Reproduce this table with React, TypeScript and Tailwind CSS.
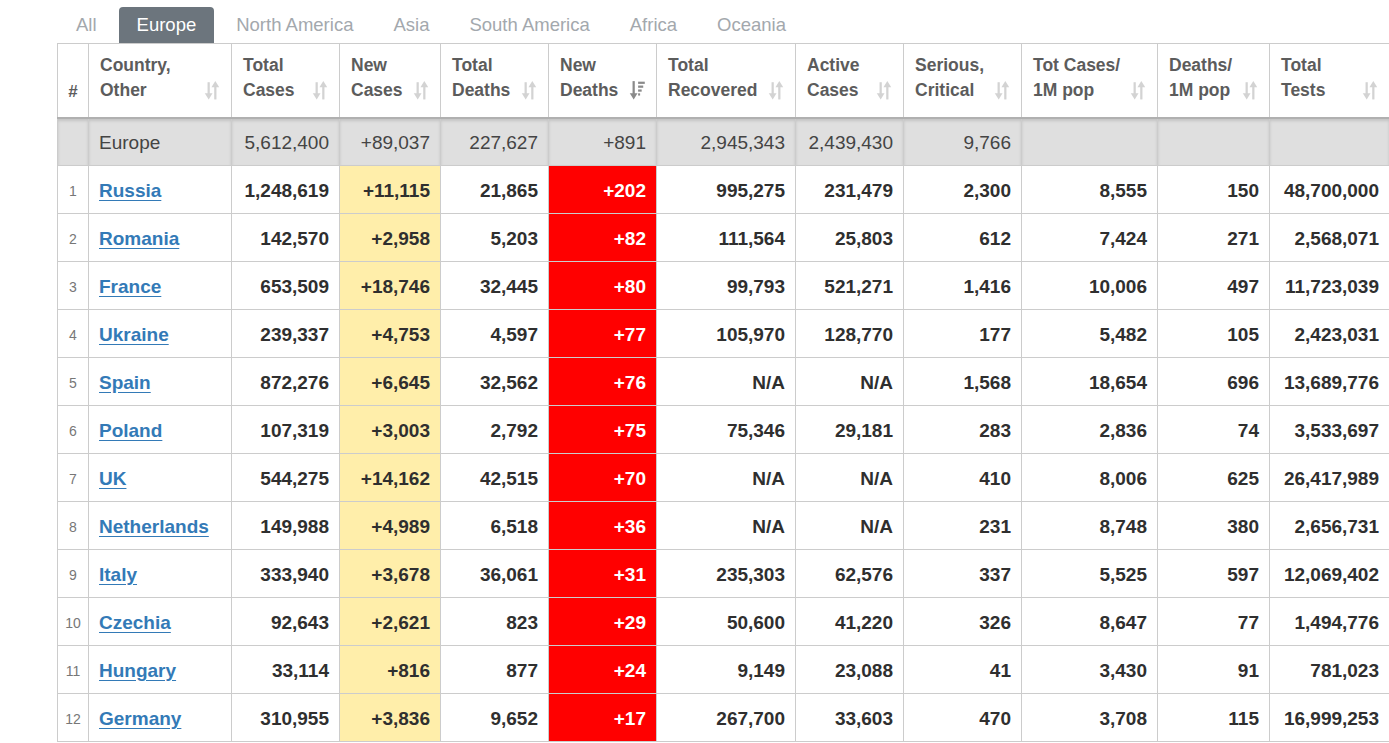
import React from "react";

const tabs = ["All", "Europe", "North America", "Asia", "South America", "Africa", "Oceania"];

const headers: { label: [string, string]; w: string; active?: boolean }[] = [
  { label: ["Country,", "Other"], w: "w-[143px]" },
  { label: ["Total", "Cases"], w: "w-[108px]" },
  { label: ["New", "Cases"], w: "w-[101px]" },
  { label: ["Total", "Deaths"], w: "w-[108px]" },
  { label: ["New", "Deaths"], w: "w-[108px]", active: true },
  { label: ["Total", "Recovered"], w: "w-[139px]" },
  { label: ["Active", "Cases"], w: "w-[108px]" },
  { label: ["Serious,", "Critical"], w: "w-[118px]" },
  { label: ["Tot Cases/", "1M pop"], w: "w-[136px]" },
  { label: ["Deaths/", "1M pop"], w: "w-[112px]" },
  { label: ["Total", "Tests"], w: "w-[120px]" },
];

const rows: string[][] = [
  ["Russia", "1,248,619", "+11,115", "21,865", "+202", "995,275", "231,479", "2,300", "8,555", "150", "48,700,000"],
  ["Romania", "142,570", "+2,958", "5,203", "+82", "111,564", "25,803", "612", "7,424", "271", "2,568,071"],
  ["France", "653,509", "+18,746", "32,445", "+80", "99,793", "521,271", "1,416", "10,006", "497", "11,723,039"],
  ["Ukraine", "239,337", "+4,753", "4,597", "+77", "105,970", "128,770", "177", "5,482", "105", "2,423,031"],
  ["Spain", "872,276", "+6,645", "32,562", "+76", "N/A", "N/A", "1,568", "18,654", "696", "13,689,776"],
  ["Poland", "107,319", "+3,003", "2,792", "+75", "75,346", "29,181", "283", "2,836", "74", "3,533,697"],
  ["UK", "544,275", "+14,162", "42,515", "+70", "N/A", "N/A", "410", "8,006", "625", "26,417,989"],
  ["Netherlands", "149,988", "+4,989", "6,518", "+36", "N/A", "N/A", "231", "8,748", "380", "2,656,731"],
  ["Italy", "333,940", "+3,678", "36,061", "+31", "235,303", "62,576", "337", "5,525", "597", "12,069,402"],
  ["Czechia", "92,643", "+2,621", "823", "+29", "50,600", "41,220", "326", "8,647", "77", "1,494,776"],
  ["Hungary", "33,114", "+816", "877", "+24", "9,149", "23,088", "41", "3,430", "91", "781,023"],
  ["Germany", "310,955", "+3,836", "9,652", "+17", "267,700", "33,603", "470", "3,708", "115", "16,999,253"],
];

const europe = ["Europe", "5,612,400", "+89,037", "227,627", "+891", "2,945,343", "2,439,430", "9,766", "", "", ""];

const SortIcon = ({ active }: { active?: boolean }) =>
  active ? (
    <svg width="16" height="20" viewBox="0 0 14 18" className="shrink-0 fill-[#8a8a8a]">
      <rect x="3" y="1" width="2" height="12" />
      <polygon points="0.5,12 7.5,12 4,17.5" />
      <rect x="8" y="1.5" width="6" height="2" />
      <rect x="8" y="5" width="4.6" height="2" />
      <rect x="8" y="8.5" width="3.2" height="2" />
      <rect x="8" y="12" width="1.8" height="2" />
    </svg>
  ) : (
    <svg width="16" height="20" viewBox="0 0 14 18" className="shrink-0 fill-[#d3d3d3]">
      <rect x="3" y="2" width="2" height="11" />
      <polygon points="0.5,12 7.5,12 4,17.5" />
      <polygon points="6.5,6.5 13.5,6.5 10,1" />
      <rect x="9" y="6" width="2" height="11.5" />
    </svg>
  );

export default function App() {
  return (
    <div className="min-h-screen bg-white font-['Liberation_Sans',Arial,sans-serif]">
      <div className="flex gap-[4px] pl-[58px] pt-[7px]">
        {tabs.map((t) => (
          <div
            key={t}
            className={`h-[36px] px-[18px] flex items-center text-[18.5px] rounded-t-[4px] ${
              t === "Europe" ? "bg-[#6c757d] text-white" : "text-[#a3a8ad]"
            }`}
          >
            {t}
          </div>
        ))}
      </div>
      <table className="ml-[57px] w-[1332px] table-fixed border-collapse">
        <colgroup>
          <col className="w-[31px]" />
          {headers.map((h, i) => (
            <col key={i} className={h.w} />
          ))}
        </colgroup>
        <thead>
          <tr className="h-[74px]">
            <th className="border border-[#cccccc] text-center align-middle text-[17px] font-bold text-[#5c5c5c] pt-[22px]">
              #
            </th>
            {headers.map((h, i) => (
              <th key={i} className="border border-[#cccccc] px-[11px] pb-[4px] align-middle font-normal">
                <div className="flex items-end justify-between text-left">
                  <div className="text-[17.5px] leading-[25px] font-bold text-[#5c5c5c]">
                    {h.label[0]}
                    <br />
                    {h.label[1]}
                  </div>
                  <div className="pb-[3px]">
                    <SortIcon active={h.active} />
                  </div>
                </div>
              </th>
            ))}
          </tr>
        </thead>
        <tbody>
          <tr className="h-[48px] bg-[#dfdfdf] text-[19px] text-[#444]">
            <td className="border border-[#cccccc] border-t-2 border-t-[#b0b0b0] shadow-[inset_0_2px_3px_rgba(0,0,0,0.12)]" />
            {europe.map((v, i) => (
              <td
                key={i}
                className={`border border-[#cccccc] border-t-2 border-t-[#b0b0b0] shadow-[inset_0_2px_3px_rgba(0,0,0,0.12)] px-[10px] pt-[3px] ${
                  i === 0 ? "text-left" : "text-right"
                }`}
              >
                {v}
              </td>
            ))}
          </tr>
          {rows.map((r, ri) => (
            <tr key={r[0]} className="h-[48px] text-[19px] font-bold text-[#2f2f2f]">
              <td className="border border-[#cccccc] text-center text-[14px] font-normal text-[#777] pt-[3px]">{ri + 1}</td>
              {r.map((v, i) => (
                <td
                  key={i}
                  className={`border border-[#cccccc] px-[10px] pt-[3px] ${
                    i === 0
                      ? "text-left pl-[10px]"
                      : i === 2
                      ? "text-right bg-[#ffeeaa]"
                      : i === 4
                      ? "text-right bg-[#ff0000] text-white"
                      : "text-right"
                  }`}
                >
                  {i === 0 ? (
                    <a href="#" className="text-[#337ab7] underline underline-offset-[3px]">
                      {v}
                    </a>
                  ) : (
                    v
                  )}
                </td>
              ))}
            </tr>
          ))}
        </tbody>
      </table>
    </div>
  );
}
